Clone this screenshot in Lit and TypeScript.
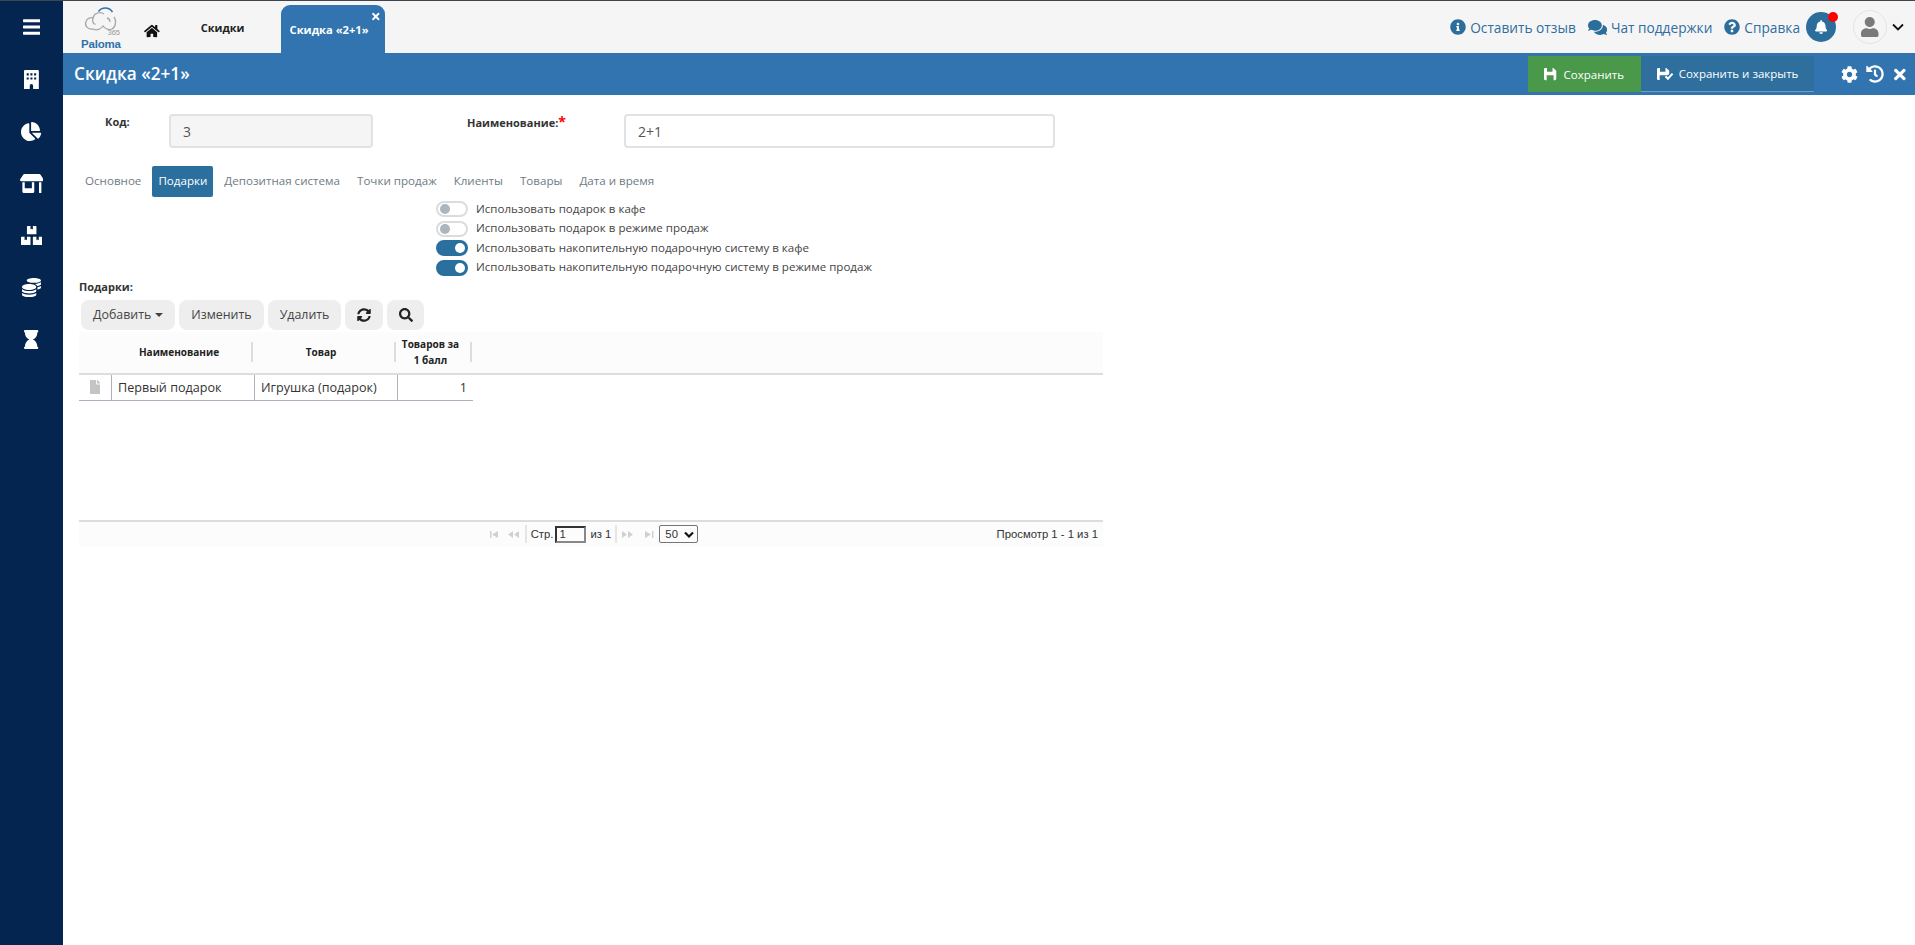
import { LitElement, html, css } from 'lit'
import { customElement } from 'lit/decorators.js'

type Icon = [number, string]

const ICONS: Record<string, Icon> = {
  bars: [448, 'M16 132h416c8.837 0 16-7.163 16-16V76c0-8.837-7.163-16-16-16H16C7.163 60 0 67.163 0 76v40c0 8.837 7.163 16 16 16zm0 160h416c8.837 0 16-7.163 16-16v-40c0-8.837-7.163-16-16-16H16c-8.837 0-16 7.163-16 16v40c0 8.837 7.163 16 16 16zm0 160h416c8.837 0 16-7.163 16-16v-40c0-8.837-7.163-16-16-16H16c-8.837 0-16 7.163-16 16v40c0 8.837 7.163 16 16 16z'],
  building: [400, 'M30 0h340a30 30 0 0 1 30 30v482H245v-90a45 45 0 0 0-90 0v90H0V30A30 30 0 0 1 30 0zM72 90v56h56V90zm100 0v56h56V90zm100 0v56h56V90zM72 200v56h56v-56zm100 0v56h56v-56zm100 0v56h56v-56z'],
  pie: [544, 'M527.79 288H290.5l158.03 158.03c6.04 6.04 15.98 6.53 22.19.68 38.7-36.46 65.32-85.61 73.13-140.86 1.34-9.46-6.51-17.85-16.06-17.85zm-15.83-64.8C503.72 103.74 408.26 8.28 288.8.04 279.68-.59 272 7.1 272 16.24V240h223.77c9.14 0 16.82-7.68 16.19-16.8zM224 288V50.71c0-9.55-8.39-17.4-17.84-16.06C86.99 51.49-4.1 155.6.14 280.37 4.5 408.51 114.83 513.59 243.03 511.98c50.4-.63 96.97-16.87 135.26-44.03 7.9-5.6 8.42-17.23 1.57-24.08L224 288z'],
  store: [640, 'M320 384H128V224H64v256c0 17.7 14.3 32 32 32h256c17.7 0 32-14.3 32-32V224h-64v160zm314.6-241.8l-85.3-128c-6-8.9-16-14.2-26.7-14.2H117.4c-10.7 0-20.7 5.3-26.6 14.2l-85.3 128c-14.2 21.3 1 49.8 26.6 49.8H608c25.5 0 40.7-28.5 26.6-49.8zM512 496c0 8.8 7.2 16 16 16h32c8.8 0 16-7.2 16-16V224h-64v272z'],
  boxes: [576, 'M560 288h-80v96l-32-21.3-32 21.3v-96h-80c-8.8 0-16 7.2-16 16v192c0 8.8 7.2 16 16 16h224c8.8 0 16-7.2 16-16V304c0-8.8-7.2-16-16-16zm-384-64h224c8.8 0 16-7.2 16-16V16c0-8.8-7.2-16-16-16h-80v96l-32-21.3L256 96V0h-80c-8.8 0-16 7.2-16 16v192c0 8.8 7.2 16 16 16zm64 64h-80v96l-32-21.3L96 384v-96H16c-8.8 0-16 7.2-16 16v192c0 8.8 7.2 16 16 16h224c8.8 0 16-7.2 16-16V304c0-8.8-7.2-16-16-16z'],
  coins: [512, 'M0 405.3V448c0 35.3 86 64 192 64s192-28.7 192-64v-42.7C342.7 434.4 267.2 448 192 448S41.3 434.4 0 405.3zM320 128c106 0 192-28.7 192-64S426 0 320 0 128 28.7 128 64s86 64 192 64zM0 300.4V352c0 35.3 86 64 192 64s192-28.7 192-64v-51.6c-41.3 34-116.9 51.6-192 51.6S41.3 334.4 0 300.4zm416 11c57.3-11.1 96-31.7 96-55.4v-42.7c-23.2 16.4-57.3 27.6-96 34.5v63.6zM192 160C86 160 0 195.8 0 240s86 80 192 80 192-35.8 192-80-86-80-192-80zm219.3 56.3c60-10.8 100.7-32 100.7-56.3v-42.7c-35.5 25.1-96.5 38.6-160.7 41.8 29.5 14.3 51.2 33.5 60 57.2z'],
  hourglass: [384, 'M360 64c13.255 0 24-10.745 24-24V24c0-13.255-10.745-24-24-24H24C10.745 0 0 10.745 0 24v16c0 13.255 10.745 24 24 24 0 90.965 51.016 167.734 120.842 192C75.016 280.266 24 357.035 24 448c-13.255 0-24 10.745-24 24v16c0 13.255 10.745 24 24 24h336c13.255 0 24-10.745 24-24v-16c0-13.255-10.745-24-24-24 0-90.965-51.016-167.734-120.842-192C308.984 231.734 360 154.965 360 64z'],
  home: [576, 'M280.37 148.26L96 300.11V464a16 16 0 0 0 16 16l112.06-.29a16 16 0 0 0 15.92-16V368a16 16 0 0 1 16-16h64a16 16 0 0 1 16 16v95.64a16 16 0 0 0 16 16.05L464 480a16 16 0 0 0 16-16V300L295.67 148.26a12.19 12.19 0 0 0-15.3 0zM571.6 251.47L488 182.56V44.05a12 12 0 0 0-12-12h-56a12 12 0 0 0-12 12v72.61L318.47 43a48 48 0 0 0-61 0L4.34 251.47a12 12 0 0 0-1.6 16.9l25.5 31A12 12 0 0 0 45.15 301l235.22-193.74a12.19 12.19 0 0 1 15.3 0L530.9 301a12 12 0 0 0 16.9-1.6l25.5-31a12 12 0 0 0-1.7-16.93z'],
  times: [352, 'M242.72 256l100.07-100.07c12.28-12.28 12.28-32.19 0-44.48l-22.24-22.24c-12.28-12.28-32.19-12.28-44.48 0L176 189.28 75.93 89.21c-12.28-12.28-32.19-12.28-44.48 0L9.21 111.45c-12.28 12.28-12.28 32.19 0 44.48L109.28 256 9.21 356.07c-12.28 12.28-12.28 32.19 0 44.48l22.24 22.24c12.28 12.28 32.2 12.28 44.48 0L176 322.72l100.07 100.07c12.28 12.28 32.2 12.28 44.48 0l22.24-22.24c12.28-12.28 12.28-32.19 0-44.48L242.72 256z'],
  info: [512, 'M256 8C119.043 8 8 119.083 8 256c0 136.997 111.043 248 248 248s248-111.003 248-248C504 119.083 392.957 8 256 8zm0 110c23.196 0 42 18.804 42 42s-18.804 42-42 42-42-18.804-42-42 18.804-42 42-42zm56 254c0 6.627-5.373 12-12 12h-88c-6.627 0-12-5.373-12-12v-24c0-6.627 5.373-12 12-12h12v-64h-12c-6.627 0-12-5.373-12-12v-24c0-6.627 5.373-12 12-12h64c6.627 0 12 5.373 12 12v100h12c6.627 0 12 5.373 12 12v24z'],
  comments: [576, 'M416 192c0-88.4-93.1-160-208-160S0 103.6 0 192c0 34.3 14.1 65.9 38 92-13.4 30.2-35.5 54.2-35.8 54.5-2.2 2.3-2.8 5.7-1.5 8.7S4.8 352 8 352c36.6 0 66.9-12.3 88.7-25 32.2 15.7 70.3 25 111.3 25 114.9 0 208-71.6 208-160zm122 220c23.9-26 38-57.7 38-92 0-66.9-53.5-124.2-129.3-148.1.9 6.6 1.3 13.3 1.3 20.1 0 105.9-107.7 192-240 192-10.8 0-21.3-.8-31.7-1.9C207.8 439.6 281.8 480 368 480c41 0 79.1-9.2 111.3-25 21.8 12.7 52.1 25 88.7 25 3.2 0 6.1-1.9 7.3-4.8 1.3-2.9.7-6.3-1.5-8.7-.3-.3-22.4-24.2-35.8-54.5z'],
  question: [512, 'M504 256c0 136.997-111.043 248-248 248S8 392.997 8 256C8 119.083 119.043 8 256 8s248 111.083 248 248zM262.655 90c-54.497 0-89.255 22.957-116.549 63.758-3.536 5.286-2.353 12.415 2.715 16.258l34.699 26.31c5.205 3.947 12.621 3.008 16.665-2.122 17.864-22.658 30.113-35.797 57.303-35.797 20.429 0 45.698 13.148 45.698 32.958 0 14.976-12.363 22.667-32.534 33.976C247.128 238.528 216 254.941 216 296v4c0 6.627 5.373 12 12 12h56c6.627 0 12-5.373 12-12v-1.333c0-28.462 83.186-29.647 83.186-106.667 0-58.002-60.165-102-116.531-102zM256 338c-25.365 0-46 20.635-46 46 0 25.364 20.635 46 46 46s46-20.636 46-46c0-25.365-20.635-46-46-46z'],
  bell: [448, 'M224 512c35.32 0 63.97-28.65 63.97-64H160.03c0 35.35 28.65 64 63.97 64zm215.39-149.71c-19.32-20.76-55.47-51.99-55.47-154.29 0-77.7-54.48-139.9-127.94-155.16V32c0-17.67-14.32-32-31.98-32s-31.98 14.33-31.98 32v20.84C118.56 68.1 64.08 130.3 64.08 208c0 102.3-36.15 133.53-55.47 154.29-6 6.45-8.66 14.16-8.61 21.71.11 16.4 12.98 32 32.1 32h383.8c19.12 0 32-15.6 32.1-32 .05-7.55-2.61-15.27-8.61-21.71z'],
  user: [448, 'M224 256c70.7 0 128-57.3 128-128S294.7 0 224 0 96 57.3 96 128s57.3 128 128 128zm89.6 32h-16.7c-22.2 10.2-46.9 16-72.9 16s-50.6-5.8-72.9-16h-16.7C60.2 288 0 348.2 0 422.4V464c0 26.5 21.5 48 48 48h352c26.5 0 48-21.5 48-48v-41.6c0-74.2-60.2-134.4-134.4-134.4z'],
  save: [448, 'M48 32H110V170H310V32H340L448 140V432a48 48 0 0 1-48 48H350V300H98V480H48A48 48 0 0 1 0 432V80A48 48 0 0 1 48 32z'],
  cog: [512, 'M487.4 315.7l-42.6-24.6c4.3-23.2 4.3-47 0-70.2l42.6-24.6c4.9-2.8 7.1-8.6 5.5-14-11.1-35.6-30-67.8-54.7-94.6-3.8-4.1-10-5.1-14.8-2.3L380.8 110c-17.9-15.4-38.5-27.3-60.8-35.1V25.8c0-5.6-3.9-10.5-9.4-11.7-36.7-8.2-74.3-7.8-109.2 0-5.5 1.2-9.4 6.1-9.4 11.7V75c-22.2 7.9-42.8 19.8-60.8 35.1L88.7 85.5c-4.9-2.8-11-1.9-14.8 2.3-24.7 26.7-43.6 58.9-54.7 94.6-1.7 5.4.6 11.2 5.5 14L67.3 221c-4.3 23.2-4.3 47 0 70.2l-42.6 24.6c-4.9 2.8-7.1 8.6-5.5 14 11.1 35.6 30 67.8 54.7 94.6 3.8 4.1 10 5.1 14.8 2.3l42.6-24.6c17.9 15.4 38.5 27.3 60.8 35.1v49.2c0 5.6 3.9 10.5 9.4 11.7 36.7 8.2 74.3 7.8 109.2 0 5.5-1.2 9.4-6.1 9.4-11.7v-49.2c22.2-7.9 42.8-19.8 60.8-35.1l42.6 24.6c4.9 2.8 11 1.9 14.8-2.3 24.7-26.7 43.6-58.9 54.7-94.6 1.5-5.5-.7-11.3-5.6-14.1zM256 336c-44.1 0-80-35.9-80-80s35.9-80 80-80 80 35.9 80 80-35.9 80-80 80z'],
  history: [512, 'M504 255.531c.253 136.64-111.18 248.372-247.82 248.468-59.015.042-113.223-20.53-155.822-54.911-11.077-8.94-11.905-25.541-1.839-35.607l11.267-11.267c8.609-8.609 22.353-9.551 31.891-1.984C173.062 425.135 212.781 440 256 440c101.705 0 184-82.311 184-184 0-101.705-82.311-184-184-184-48.814 0-93.149 18.969-126.068 49.932l50.754 50.754c10.08 10.08 2.941 27.314-11.313 27.314H24c-8.837 0-16-7.163-16-16V38.627c0-14.254 17.234-21.393 27.314-11.314l49.372 49.372C129.209 34.136 189.552 8 256 8c136.81 0 247.747 110.78 248 247.531zm-180.912 78.784l9.823-12.63c8.138-10.463 6.253-25.542-4.21-33.679L288 256.349V152c0-13.255-10.745-24-24-24h-16c-13.255 0-24 10.745-24 24v135.651l65.409 50.874c10.463 8.137 25.541 6.253 33.679-4.21z'],
  sync: [512, 'M370.72 133.28C339.458 104.008 298.888 87.962 255.848 88c-77.458.068-144.328 53.178-162.791 126.85-1.344 5.363-6.122 9.15-11.651 9.15H24.103c-7.498 0-13.194-6.807-11.807-14.176C33.933 94.924 134.813 8 256 8c66.448 0 126.791 26.136 171.315 68.685L463.03 40.97C478.149 25.851 504 36.559 504 57.941V192c0 13.255-10.745 24-24 24H345.941c-21.382 0-32.09-25.851-16.971-40.971l41.75-41.749zM32 296h134.059c21.382 0 32.09 25.851 16.971 40.971l-41.75 41.75c31.262 29.273 71.835 45.319 114.876 45.28 77.418-.07 144.315-53.144 162.787-126.849 1.344-5.363 6.122-9.15 11.651-9.15h57.304c7.498 0 13.194 6.807 11.807 14.176C478.067 417.076 377.187 504 256 504c-66.448 0-126.791-26.136-171.315-68.685L48.97 471.03C33.851 486.149 8 475.441 8 454.059V320c0-13.255 10.745-24 24-24z'],
  search: [512, 'M505 442.7L405.3 343c-4.5-4.5-10.6-7-17-7H372c27.6-35.3 44-79.7 44-128C416 93.1 322.9 0 208 0S0 93.1 0 208s93.1 208 208 208c48.3 0 92.7-16.4 128-44v16.3c0 6.4 2.5 12.5 7 17l99.7 99.7c9.4 9.4 24.6 9.4 33.9 0l28.3-28.3c9.4-9.4 9.4-24.6.1-34zM208 336c-70.7 0-128-57.2-128-128 0-70.7 57.2-128 128-128 70.7 0 128 57.2 128 128 0 70.7-57.2 128-128 128z'],
  file: [384, 'M224 136V0H24C10.7 0 0 10.7 0 24v464c0 13.3 10.7 24 24 24h336c13.3 0 24-10.7 24-24V160H248c-13.2 0-24-10.8-24-24zm160-14.1v6.1H256V0h6.1c6.4 0 12.5 2.5 17 7l97.9 98c4.5 4.5 7 10.6 7 16.9z'],
}

const icon = (name: string, size: number, color = 'currentColor') => {
  const [w, d] = ICONS[name]
  return html`<svg class="icon" viewBox="0 0 ${w} 512" style="height:${size}px;color:${color}"><path fill="currentColor" fill-rule="evenodd" d=${d}></path></svg>`
}

// jqGrid pager arrows, 12x7
const PAGER_ARROWS = [
  'M1 0h1.500v7H1zM9 0v7L3 3.500z',
  'M6 0v7L1 3.500zM12 0v7L7 3.500z',
  'M0 0v7l5-3.500zM6 0v7l5-3.500z',
  'M2 0v7l6-3.500zM9 0h1.500v7H9z',
]
const arrow = (i: number, cls: string) =>
  html`<svg class=${cls} width="12" height="7" viewBox="0 0 12 7"><path fill="#d0d0d0" d=${PAGER_ARROWS[i]}></path></svg>`

const SIDE = ['building', 'pie', 'store', 'boxes', 'coins', 'hourglass']
const TABS = ['Основное', 'Подарки', 'Депозитная система', 'Точки продаж', 'Клиенты', 'Товары', 'Дата и время']
const TOGGLES: [string, boolean][] = [
  ['Использовать подарок в кафе', false],
  ['Использовать подарок в режиме продаж', false],
  ['Использовать накопительную подарочную систему в кафе', true],
  ['Использовать накопительную подарочную систему в режиме продаж', true],
]

@customElement('app-root')
export class AppRoot extends LitElement {
  static styles = css`
    :host {
      display: block;
      height: 945px;
      overflow: hidden;
      background: #fff;
      font-family: 'Open Sans', 'Noto Sans', sans-serif;
      font-size: 12px;
      color: #333;
      border-top: 1px solid #40444c;
      box-sizing: border-box;
    }
    .icon {
      display: block;
      flex: none;
    }
    .layout {
      display: flex;
      height: 100%;
    }
    .side {
      width: 63px;
      flex: none;
      background: #03254f;
      color: #fff;
      display: flex;
      flex-direction: column;
      align-items: center;
      padding-top: 16px;
      box-sizing: border-box;
    }
    .side-item {
      height: 52px;
      display: flex;
      align-items: center;
      justify-content: center;
    }
    .side-item.menu {
      height: 20px;
      margin-bottom: 16px;
    }
    .main {
      flex: 1;
      min-width: 0;
    }

    /* top strip with tabs */
    .top {
      height: 52px;
      background: #f5f5f5;
      display: flex;
      align-items: flex-end;
    }
    .logo {
      width: 56px;
      height: 46px;
      margin: 0 0 3px 14px;
      flex: none;
      position: relative;
      font-family: 'Liberation Sans', sans-serif;
    }
    .logo svg {
      position: absolute;
      left: 6px;
      top: 3px;
      overflow: visible;
    }
    .logo .year {
      position: absolute;
      right: 13px;
      top: 24.5px;
      font-size: 7.5px;
      line-height: 8px;
      color: #999;
    }
    .logo .brand {
      position: absolute;
      left: 4px;
      bottom: 1.5px;
      font-size: 11.5px;
      font-weight: 700;
      color: #2e72ac;
      line-height: 10px;
      letter-spacing: -0.2px;
    }
    .home {
      margin: 0 0 15px 11px;
    }
    .crumb {
      margin: 0 36px 17px 41px;
      font-weight: 700;
      font-size: 11px;
      color: #222;
      line-height: 16px;
    }
    .tab {
      position: relative;
      width: 104px;
      height: 48px;
      background: #3174b0;
      color: #fff;
      border-radius: 9px 9px 0 0;
      font-weight: 700;
      font-size: 11.2px;
      display: flex;
      align-items: center;
      padding-left: 9px;
      box-sizing: border-box;
    }
    .tab .close {
      position: absolute;
      right: 5px;
      top: 6px;
    }
    .top-links {
      margin-left: auto;
      height: 100%;
      display: flex;
      align-items: center;
      color: #2f6e9e;
      font-size: 13.7px;
    }
    .link {
      display: flex;
      align-items: center;
      gap: 4px;
      margin-right: 12px;
    }
    .bell {
      width: 30px;
      height: 30px;
      border-radius: 50%;
      background: #2c6e9b;
      display: flex;
      align-items: center;
      justify-content: center;
      position: relative;
      margin-left: -6px;
    }
    .dot {
      position: absolute;
      right: -2px;
      top: 0;
      width: 10px;
      height: 10px;
      border-radius: 50%;
      background: #f00;
    }
    .avatar {
      width: 34px;
      height: 34px;
      border: 1px solid #e4e4e4;
      border-radius: 50%;
      box-sizing: border-box;
      margin-left: 17px;
      display: flex;
      align-items: center;
      justify-content: center;
    }
    .chev {
      margin: 0 11px 0 5px;
    }

    /* blue title bar */
    .bar {
      height: 42px;
      background: #3174b0;
      display: flex;
      align-items: center;
      color: #fff;
      padding-left: 11px;
    }
    .bar h1 {
      margin: 0;
      font-size: 17.2px;
      font-weight: 600;
      line-height: 24px;
    }
    .bar-actions {
      margin-left: auto;
      display: flex;
      align-items: center;
      height: 36px;
      font-size: 11.5px;
      font-weight: 500;
    }
    .act {
      height: 36px;
      display: flex;
      align-items: center;
      gap: 7px;
      box-sizing: border-box;
    }
    .act.save {
      width: 113px;
      padding-left: 16px;
      background: #4a994a;
    }
    .act.close {
      width: 173px;
      padding-left: 16px;
      gap: 5px;
      background: #2e6f9e;
      border-bottom: 1px solid #6f9fc6;
    }
    .bar-icons {
      display: flex;
      align-items: center;
      gap: 8px;
      margin: 0 9px 0 27px;
    }
    .bar-icons .last {
      margin-left: 2px;
    }

    /* form */
    .form {
      display: flex;
      padding: 19px 0 0 0;
      height: 71px;
      box-sizing: border-box;
    }
    .f-label {
      font-weight: 700;
      font-size: 11px;
      color: #333;
      line-height: 16px;
    }
    .f-label em {
      color: #f00;
      font-style: normal;
      font-size: 14px;
    }
    .field {
      height: 34px;
      border: 2px solid #e2e2e2;
      border-radius: 4px;
      box-sizing: border-box;
      font-size: 14px;
      color: #555;
      padding-left: 12px;
      display: flex;
      align-items: center;
    }
    .tabs {
      display: flex;
      height: 31px;
      margin-left: 16px;
      font-size: 11.6px;
      color: #6e7b85;
    }
    .tabs span {
      padding: 0 6px 2px;
      display: flex;
      align-items: center;
      margin-right: 5px;
      border-radius: 2px;
    }
    .tabs .on {
      background: #2a6f9e;
      color: #fff;
    }
    .toggles {
      padding: 4px 0 0 373px;
      display: flex;
      flex-direction: column;
      gap: 3.5px;
    }
    .t-row {
      display: flex;
      align-items: center;
      gap: 8px;
      height: 16px;
      font-size: 11.55px;
      color: #444;
    }
    .t-row span:last-child {
      margin-bottom: 2px;
    }
    .switch {
      width: 32px;
      height: 16px;
      border-radius: 8px;
      border: 2px solid #dcdcdc;
      box-sizing: border-box;
      position: relative;
      flex: none;
      background: #fff;
    }
    .switch::after {
      content: '';
      position: absolute;
      left: 2px;
      top: 1px;
      width: 10px;
      height: 10px;
      border-radius: 50%;
      background: #adb5bd;
    }
    .switch.on {
      background: #2a6f9e;
      border-color: #2a6f9e;
    }
    .switch.on::after {
      left: auto;
      right: 1px;
      background: #fff;
    }

    /* grid */
    .gifts {
      width: 1024px;
      margin: 0 0 0 16px;
    }
    .gifts-title {
      font-weight: 700;
      font-size: 11px;
      line-height: 16px;
      margin-top: 3px;
      color: #333;
    }
    .tools {
      display: flex;
      gap: 4px;
      margin: 5px 0 2px 2px;
    }
    .btn {
      height: 30px;
      padding: 0 12px;
      background: #eee;
      border-radius: 8px;
      display: flex;
      align-items: center;
      font-size: 12.4px;
      color: #444;
    }
    .btn.sq {
      width: 37.5px;
      padding: 0;
      justify-content: center;
    }
    .caret {
      width: 0;
      height: 0;
      margin-left: 4px;
      border: 4px solid transparent;
      border-top-color: #444;
      border-bottom: 0;
    }
    .grid-head,
    .grid-row {
      display: grid;
    }
    .grid-head {
      grid-template-columns: 33px 141px 143px 76px;
      height: 43px;
      background: #fcfcfc;
      border-bottom: 2px solid #ddd;
      font-weight: 700;
      font-size: 10px;
      color: #222;
      align-items: center;
      text-align: center;
      line-height: 16px;
      box-sizing: border-box;
    }
    .grid-head div {
      border-right: 2px solid #ddd;
      height: 20px;
      padding-right: 5px;
      display: flex;
      align-items: center;
      justify-content: center;
    }
    .grid-head .first {
      border: 0;
    }
    .grid-row {
      grid-template-columns: 33px 143px 143px 75px;
      width: 394px;
      height: 26px;
      border-bottom: 1px solid #aab2bd;
      box-sizing: border-box;
      font-size: 12.6px;
      color: #333;
    }
    .grid-row div {
      display: flex;
      align-items: center;
      padding: 0 6px;
      border-right: 1px solid #aab2bd;
    }
    .grid-row .first {
      justify-content: center;
      padding: 0;
    }
    .grid-row .num {
      justify-content: flex-end;
      border-right: 0;
    }
    .pager {
      margin-top: 119px;
      height: 25px;
      border-top: 2px solid #ddd;
      background: #fcfcfc;
      display: flex;
      align-items: center;
      font-family: 'Liberation Sans', sans-serif;
      font-size: 11.3px;
      color: #333;
      position: relative;
    }
    .pg-mid {
      flex: 1;
      display: flex;
      align-items: center;
      justify-content: center;
      padding-left: 5px;
    }
    .ml2 {
      margin-left: 2px;
    }
    .ml4 {
      margin-left: 4px;
    }
    .ml5 {
      margin-left: 5px;
    }
    .ml6 {
      margin-left: 6px;
    }
    .ml9 {
      margin-left: 9px;
    }
    .pg-sep {
      width: 2px;
      height: 18px;
      background: #e6e6e6;
    }
    .pg-input {
      width: 25px;
      height: 13px;
      border: 2px solid #333;
      border-right-color: #888;
      border-bottom-color: #888;
      padding-left: 2px;
      line-height: 13px;
      box-sizing: content-box;
    }
    .pg-select {
      width: 39px;
      height: 18px;
      box-sizing: border-box;
      border: 1px solid #767676;
      border-radius: 2px;
      display: flex;
      align-items: center;
      justify-content: space-between;
      padding: 0 3px 0 5px;
    }
    .pg-info {
      position: absolute;
      right: 5px;
    }
  `

  render() {
    return html`
      <div class="layout">
        <nav class="side">
          <div class="side-item menu">${icon('bars', 20)}</div>
          ${SIDE.map((n) => html`<div class="side-item">${icon(n, 19)}</div>`)}
        </nav>
        <div class="main">
          <header class="top">
            <div class="logo">
              <svg width="34" height="24" viewBox="0 0 34 24" fill="none" stroke-width="1.3">
                <path stroke="#a9a9a9" d="M10 22C4 23 1.500 18 3 14.500 4 11 8 10 10 11 11 6 17 4 21 7"></path>
                <path stroke="#a9a9a9" d="M31 10C33.500 13 33 20 29 22 26 23.500 22 22 20 19 18 22 14 24 10 22"></path>
                <path stroke="#a9a9a9" d="M10 11C9 14 10 16.500 12.500 17.500M24 11C26 11.500 27 13 27 15"></path>
                <path stroke="#2e72ac" stroke-width="1.500" d="M15.500 4.500C18.500 0 26-.5 29.500 5"></path>
              </svg>
              <span class="year">365</span>
              <span class="brand">Paloma</span>
            </div>
            <div class="home">${icon('home', 14, '#111')}</div>
            <div class="crumb">Скидки</div>
            <div class="tab">
              Скидка «2+1»
              <span class="close">${icon('times', 11, '#fff')}</span>
            </div>
            <div class="top-links">
              <div class="link">${icon('info', 16, '#2c6e9b')}Оставить отзыв</div>
              <div class="link">${icon('comments', 17, '#2c6e9b')}Чат поддержки</div>
              <div class="link">${icon('question', 16, '#2c6e9b')}Справка</div>
              <div class="bell">
                ${icon('bell', 14, '#fff')}
                <span class="dot"></span>
              </div>
              <div class="avatar">${icon('user', 20, '#7a7a7a')}</div>
              <svg class="chev" width="12" height="8" viewBox="0 0 12 8" fill="none" stroke="#111" stroke-width="1.800">
                <path d="M1 1.500l5 5 5-5"></path>
              </svg>
            </div>
          </header>

          <section class="bar">
            <h1>Скидка «2+1»</h1>
            <div class="bar-actions">
              <div class="act save">${icon('save', 14, '#fff')}Сохранить</div>
              <div class="act close">
                <svg class="icon" viewBox="0 0 600 512" height="14" width="16.400" fill="none">
                  <path fill="#fff" d=${ICONS.save[1]}></path>
                  <path stroke="#2e6f9e" stroke-width="170" d="M310 340L400 430 570 240"></path>
                  <path stroke="#fff" stroke-width="75" d="M310 340L400 430 570 240"></path>
                </svg>
                Сохранить и закрыть
              </div>
            </div>
            <div class="bar-icons">
              ${icon('cog', 17, '#fff')} ${icon('history', 18, '#fff')}
              <span class="last">${icon('times', 17, '#fff')}</span>
            </div>
          </section>

          <section class="form">
            <div class="f-label" style="width:64px;margin-left:42px">Код:</div>
            <div class="field" style="width:204px;background:#f5f5f5">3</div>
            <div class="f-label" style="width:157px;margin-left:94px">Наименование:<em>*</em></div>
            <div class="field" style="width:431px">2+1</div>
          </section>

          <div class="tabs">
            ${TABS.map((t, i) => html`<span class=${i === 1 ? 'on' : ''}>${t}</span>`)}
          </div>

          <div class="toggles">
            ${TOGGLES.map(
              ([label, on]) => html`<div class="t-row">
                <span class="switch ${on ? 'on' : ''}"></span><span>${label}</span>
              </div>`,
            )}
          </div>

          <section class="gifts">
            <div class="gifts-title">Подарки:</div>
            <div class="tools">
              <div class="btn">Добавить<span class="caret"></span></div>
              <div class="btn">Изменить</div>
              <div class="btn">Удалить</div>
              <div class="btn sq">${icon('sync', 14, '#222')}</div>
              <div class="btn sq">${icon('search', 14, '#222')}</div>
            </div>
            <div class="grid-head">
              <div class="first"></div>
              <div>Наименование</div>
              <div>Товар</div>
              <div>Товаров за<br />1 балл</div>
            </div>
            <div class="grid-row">
              <div class="first">${icon('file', 14, '#c4c4c4')}</div>
              <div>Первый подарок</div>
              <div>Игрушка (подарок)</div>
              <div class="num">1</div>
            </div>
            <div class="pager">
              <div class="pg-mid">
                ${arrow(0, '')} ${arrow(1, 'ml6')}
                <span class="pg-sep ml6"></span>
                <span class="ml4">Стр.</span>
                <span class="pg-input ml2">1</span>
                <span class="ml4">из 1</span>
                <span class="pg-sep ml4"></span>
                ${arrow(2, 'ml5')} ${arrow(3, 'ml9')}
                <span class="pg-select ml4">50
                  <svg width="10" height="7" viewBox="0 0 10 7" fill="none" stroke="#111" stroke-width="2.200">
                    <path d="M1 1.500l4 4 4-4"></path>
                  </svg>
                </span>
              </div>
              <div class="pg-info">Просмотр 1 - 1 из 1</div>
            </div>
          </section>
        </div>
      </div>
    `
  }
}

declare global {
  interface HTMLElementTagNameMap {
    'app-root': AppRoot
  }
}
